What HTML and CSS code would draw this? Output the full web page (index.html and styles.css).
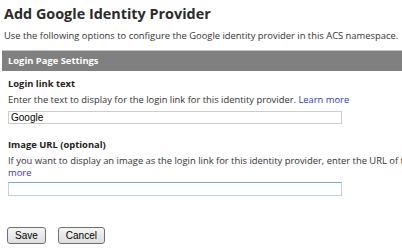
FILE: index.html
```html
<!DOCTYPE html>
<html lang="en">
<head>
    <meta charset="UTF-8">
    <title>Add Google Identity Provider</title>
    <link rel="stylesheet" href="styles.css">
</head>
<body>
    <h1 class="page-title">Add Google Identity Provider</h1>
    <p class="intro">Use the following options to configure the Google identity provider in this ACS namespace.</p>

    <div class="section-bar">Login Page Settings</div>

    <div class="section">
        <div class="field">
            <div class="label">Login link text</div>
            <p class="hint">Enter the text to display for the login link for this identity provider. <a href="#">Learn more</a></p>
            <input class="text-box" type="text" value="Google">
        </div>

        <div class="field">
            <div class="label">Image URL (optional)</div>
            <p class="hint">If you want to display an image as the login link for this identity provider, enter the URL of the image file. <a href="#">Learn<br>more</a></p>
            <input class="text-box active" type="text" value="">
        </div>

        <div class="buttons">
            <button class="btn">Save</button>
            <button class="btn">Cancel</button>
        </div>
    </div>
</body>
</html>
```
FILE: styles.css
```css
* {
    box-sizing: border-box;
}

html, body {
    overflow: hidden;
}

body {
    margin: 0;
    padding: 0 0 0 4px;
    background: #fff;
    color: #333;
    font-family: "Open Sans", sans-serif;
    font-size: 9.4px;
}

.page-title {
    margin: 0;
    padding-top: 4px;
    font-size: 14.4px;
    line-height: 20px;
    font-weight: bold;
    color: #2b2b2b;
    white-space: nowrap;
}

.intro {
    margin: 5px 0 0;
    line-height: 14px;
    white-space: nowrap;
}

.section-bar {
    margin: 7px 0 0 -2px;
    height: 21px;
    padding-left: 6px;
    background: #808080;
    border-top: 1px solid #c4c4c4;
    color: #fff;
    font-weight: bold;
    line-height: 20px;
}

.section {
    padding-left: 4px;
}

.field {
    padding-top: 6px;
}

.field + .field {
    padding-top: 14px;
}

.label {
    font-weight: bold;
    line-height: 14px;
    color: #222;
}

.hint {
    margin: 3px 0 0;
    line-height: 12px;
    white-space: nowrap;
}

.hint a {
    color: #3434d0;
    text-decoration: none;
}

.text-box {
    display: block;
    width: 334px;
    height: 13px;
    margin-top: 5px;
    padding: 0 2px;
    border: 1px solid #cdcdcd;
    font-family: "Liberation Sans", Arial, sans-serif;
    font-size: 10px;
    color: #000;
    outline: none;
}

.text-box.active {
    height: 14px;
    margin-top: 3px;
    border-color: #b7d2ec;
    border-top-color: #7ca9d4;
}

.buttons {
    display: flex;
    gap: 12px;
    margin-top: 31px;
    margin-left: -1px;
}

.btn {
    height: 17px;
    padding: 0 7px;
    border: 1px solid #707070;
    border-radius: 3px;
    background: linear-gradient(#f4f4f4, #dedede);
    font-family: "Liberation Sans", Arial, sans-serif;
    font-size: 10px;
    color: #000;
    line-height: 15px;
}
```
